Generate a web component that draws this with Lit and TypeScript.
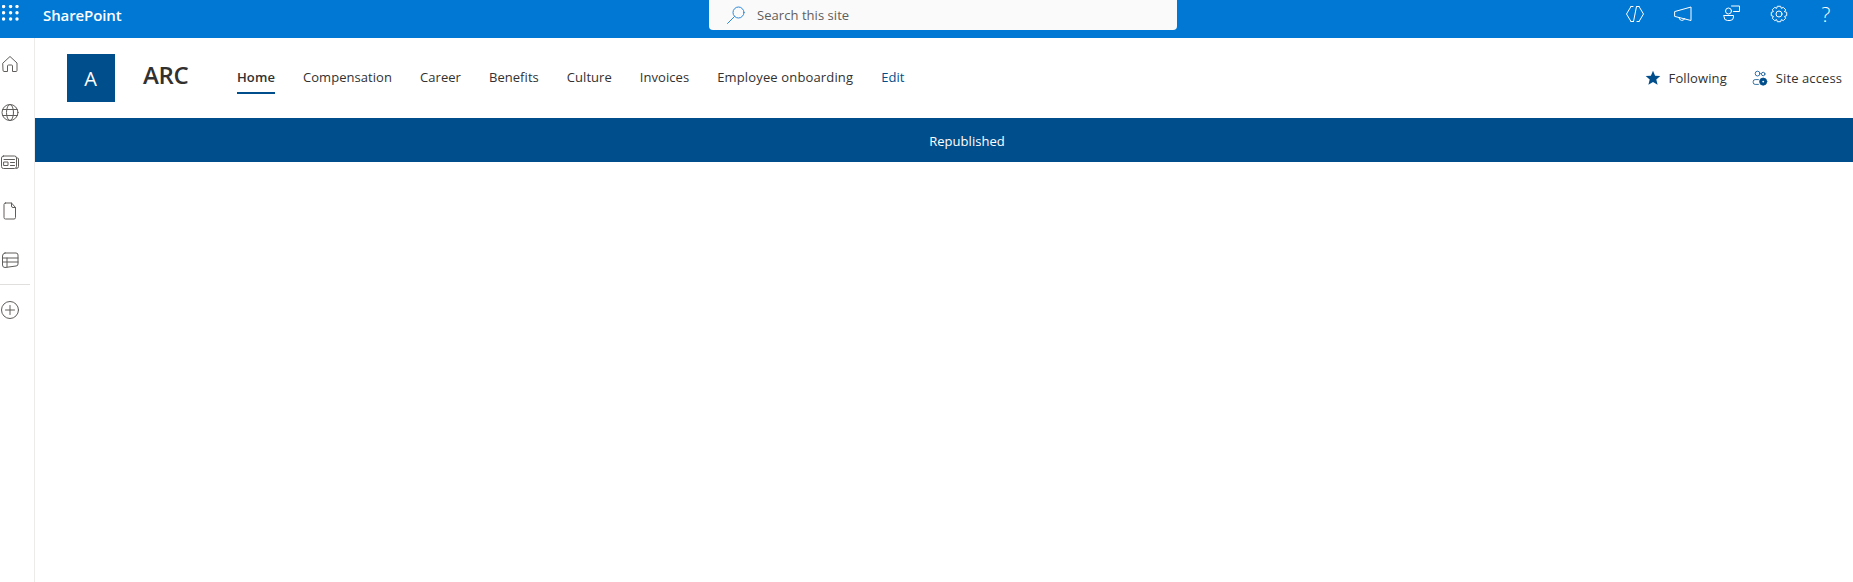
import { LitElement, html, css, svg } from "lit";
import { customElement } from "lit/decorators.js";

const icon = (size: number, body: unknown) => html`<svg width=${size} height=${size} viewBox="0 0 20 20" fill="none" stroke="currentColor" stroke-width="1" stroke-linecap="round" stroke-linejoin="round">${body}</svg>`;

const waffle = html`<svg class="waffle" width="17" height="16" viewBox="0 0 17 16" fill="#fff">${[1.6, 7.8, 14].flatMap((y) => [1.6, 8.6, 15].map((x) => svg`<circle cx=${x} cy=${y} r="1.7"/>`))}</svg>`;

const gearPath = (() => {
  const teeth = 8;
  const pts: string[] = [];
  for (let i = 0; i < teeth; i++) {
    const a = (i / teeth) * Math.PI * 2;
    const step = (Math.PI * 2) / teeth;
    const offsets: [number, number][] = [[-0.5, 6.1], [-0.27, 7.9], [0.27, 7.9]];
    for (const [o, r] of offsets) {
      const t = a + o * step;
      pts.push(`${(10 + r * Math.cos(t)).toFixed(2)} ${(10 + r * Math.sin(t)).toFixed(2)}`);
    }
  }
  return "M" + pts.join("L") + "z";
})();

const railIcons = [
  svg`<path d="M3 9 10 2.500l7 6.500v7.500a1 1 0 0 1-1 1h-3.500V12a1 1 0 0 0-1-1h-3a1 1 0 0 0-1 1v5.500H4a1 1 0 0 1-1-1z"/>`,
  svg`<circle cx="10" cy="9.500" r="8"/><ellipse cx="10" cy="9.500" rx="3.500" ry="8"/><path d="M2.600 6.500h14.800M2.600 12.500h14.800"/>`,
  svg`<rect x="1.500" y="4" width="15" height="12.500" rx="2"/><path d="M16.500 6h1a1 1 0 0 1 1 1v7.500a2 2 0 0 1-2 2M4 7.500h10.500M10.500 10.500h4M10.500 13.500h4"/><rect x="4" y="10" width="4" height="3.500"/>`,
  svg`<path d="M5.500 2h6l4 4.500v10a1.500 1.500 0 0 1-1.500 1.500H5.500A1.500 1.500 0 0 1 4 16.500v-13A1.500 1.500 0 0 1 5.500 2zM11.500 2v3a1.500 1.500 0 0 0 1.500 1.500h2.500"/>`,
  svg`<path d="M5 3h11a2 2 0 0 1 2 2v9a2 2 0 0 1-2 2l-11 1.500a2.500 2.500 0 0 1-2.500-2.500V6A3 3 0 0 1 5 3zM2.500 8h15.500M2.500 12h15.500M7 8v9"/>`,
];

const topIcons = [
  svg`<path d="M6 2.500 1.500 10 6 17.500M14 2.500 18.500 10 14 17.500M11.500 2.500 8.500 17.500M6 2.500h2M6 17.500h2M12 2.500h2M12 17.500h2"/>`,
  svg`<path d="M2 7.500 18 3v13.500L2 12.500zM6 13.500a3 3 0 0 0 5.800 1"/>`,
  svg`<circle cx="7.500" cy="7" r="3"/><path d="M10.500 2h8v5.500h-6M3 11.500h9.500V13A3.500 3.500 0 0 1 9 16.500H6.500A3.500 3.500 0 0 1 3 13z"/>`,
  svg`<path d=${gearPath}/><circle cx="10" cy="10" r="3"/>`,
];

@customElement("app-root")
export class AppRoot extends LitElement {
  static styles = css`
    :host { display: block; width: 1853px; height: 582px; overflow: hidden; background: #fff; font-family: "Open Sans", "Noto Sans", sans-serif; color: #323130; }
    .top { height: 38px; background: #0078d4; color: #fff; display: grid; grid-template-columns: 709px 468px 1fr; }
    .brand { display: flex; align-items: flex-start; padding: 6px 0 0 2px; gap: 24px; }
    .waffle { flex: none; margin-top: -1px; }
    .name { font-size: 15px; font-weight: 600; line-height: 18px; letter-spacing: -0.1px; }
    .search { height: 30px; background: #fafafa; border-radius: 0 0 4px 4px; display: flex; align-items: center; padding-left: 17px; gap: 11px; color: #605e5c; font-size: 13px; letter-spacing: 0.05px; }
    .search svg { color: #2b88d8; }
    .tools { display: flex; justify-content: flex-end; gap: 28px; padding: 4px 17px 0 0; align-items: flex-start; }
    .q { width: 20px; height: 20px; margin-left: -1px; font-size: 21px; line-height: 20px; text-align: center; font-weight: 300; font-family: "Open Sans", sans-serif; }
    .body { display: flex; height: 544px; }
    .rail { width: 34px; border-right: 1px solid #edebe9; display: flex; flex-direction: column; color: #605e5c; padding-top: 16px; box-sizing: content-box; }
    .rail .slot { height: 20px; margin-bottom: 29px; display: flex; }
    .rail hr { width: 30px; margin: -15px 0 15px; border: 0; border-top: 1px solid #e1dfdd; }
    .main { flex: 1; display: flex; flex-direction: column; min-width: 0; }
    .head { box-sizing: border-box; height: 80px; display: flex; align-items: flex-start; padding: 16px 11px 0 32px; }
    .logo { box-sizing: border-box; width: 48px; height: 48px; padding-right: 1px; background: #004e8c; color: #fff; font-size: 20px; display: flex; align-items: center; justify-content: center; flex: none; }
    .title { margin: 5px 0 0 28px; width: 94px; font-size: 24px; font-weight: 600; line-height: 32px; letter-spacing: -0.4px; flex: none; }
    nav { display: flex; gap: 28px; height: 32px; margin-top: 8px; font-size: 13px; letter-spacing: 0.05px; }
    nav a { line-height: 31px; height: 32px; white-space: nowrap; box-sizing: border-box; }
    nav a.on { font-weight: 600; border-bottom: 2px solid #004e8c; letter-spacing: 0.1px; }
    nav a.wide { letter-spacing: 0.15px; }
    nav a.edit { color: #004e8c; }
    .right { margin-left: auto; display: flex; margin-top: 8px; gap: 25px; font-size: 13px; letter-spacing: 0.1px; }
    .right div { display: flex; align-items: center; height: 31px; gap: 8px; color: #323130; }
    .right svg { color: #004e8c; }
    .banner { box-sizing: border-box; height: 44px; padding: 1px 0 0 46px; background: #004e8c; color: #fff; display: flex; align-items: center; justify-content: center; font-size: 13px; font-weight: 500; letter-spacing: 0.05px; }
  `;

  render() {
    return html`
      <div class="top">
        <div class="brand">${waffle}<span class="name">SharePoint</span></div>
        <div class="search">${icon(20, svg`<circle cx="12.500" cy="7.500" r="5.500"/><path d="M8.500 11.500 1.500 18.500"/>`)}<span>Search this site</span></div>
        <div class="tools">
          ${topIcons.map((b) => icon(20, b))}
          <div class="q">?</div>
        </div>
      </div>
      <div class="body">
        <div class="rail">
          ${railIcons.map((b) => html`<div class="slot">${icon(20, b)}</div>`)}
          <hr />
          <div class="slot">${icon(20, svg`<circle cx="10" cy="10" r="8.500"/><path d="M10 5.500v9M5.500 10h9"/>`)}</div>
        </div>
        <div class="main">
          <div class="head">
            <div class="logo">A</div>
            <div class="title">ARC</div>
            <nav>
              <a class="on">Home</a><a>Compensation</a><a>Career</a><a>Benefits</a><a>Culture</a><a>Invoices</a><a class="wide">Employee onboarding</a><a class="edit">Edit</a>
            </nav>
            <div class="right">
              <div><svg width="16" height="16" viewBox="0 0 16 16" fill="currentColor"><path d="M8 .8l2.100 4.900 5.200.4-4 3.400 1.300 5.200L8 11.900l-4.600 2.800 1.300-5.200-4-3.400 5.200-.4z"/></svg>Following</div>
              <div>${icon(16, svg`<circle cx="7" cy="4.500" r="3"/><circle cx="14" cy="5" r="2.200"/><path d="M8 18H4a2.500 2.500 0 0 1-2.500-2.500v-1A2.500 2.500 0 0 1 4 12h4"/><circle cx="14" cy="14.500" r="4.500" fill="currentColor"/><circle cx="14" cy="14.500" r="1.200" fill="#fff" stroke="none"/>`)}Site access</div>
            </div>
          </div>
          <div class="banner">Republished</div>
        </div>
      </div>
    `;
  }
}
